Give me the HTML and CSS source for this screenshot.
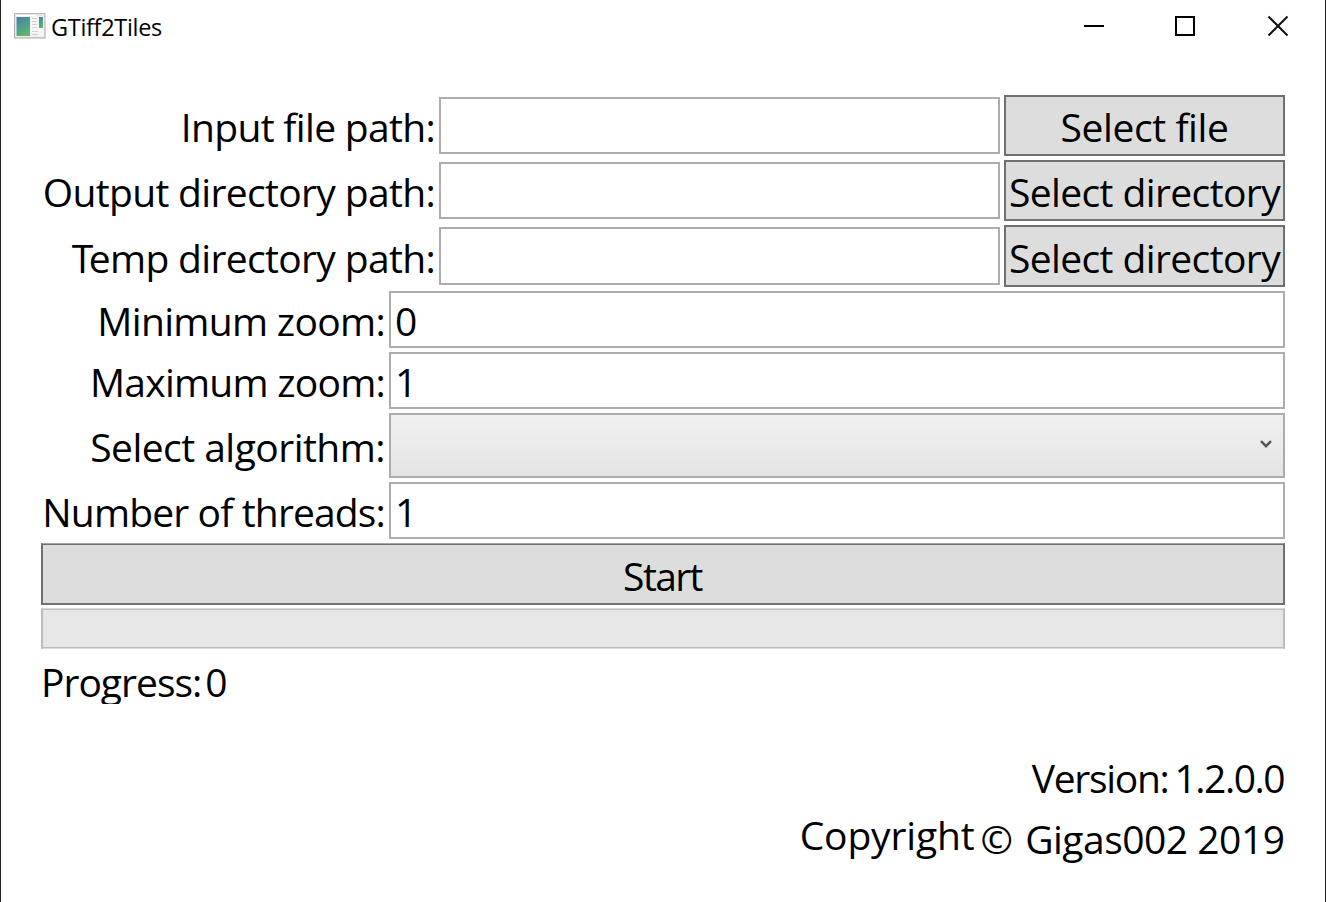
FILE: index.html
```html
<!DOCTYPE html>
<html lang="en">
<head>
<meta charset="utf-8">
<title>GTiff2Tiles</title>
<link rel="stylesheet" href="styles.css">
</head>
<body>
<div class="window">
  <header class="titlebar">
    <svg class="app-icon" width="32" height="27" viewBox="0 0 32 27">
      <defs>
        <linearGradient id="pane" x1="0" y1="0" x2="0.5" y2="1"><stop offset="0" stop-color="#4a7ba6"/><stop offset="0.5" stop-color="#4c9a92"/><stop offset="1" stop-color="#62b56b"/></linearGradient>
        <linearGradient id="frame" x1="0" y1="0" x2="0" y2="1"><stop offset="0" stop-color="#b4b7bd"/><stop offset="1" stop-color="#a9a9b0"/></linearGradient>
      </defs>
      <rect x="0.5" y="0.5" width="30.500" height="24.500" fill="#e6e7ea" stroke="url(#frame)"/>
      <rect x="2" y="3" width="28" height="20.500" fill="#f5f5f6"/>
      <path d="M2 2.5H22" stroke="#fff"/>
      <rect x="2.500" y="4" width="13.500" height="19" fill="url(#pane)"/>
      <path d="M18 5.5h5M18 8.5h5M18 11.5h5M18 14.5h5M18 18.500h6M18 21.500h6" stroke="#d2d2d4"/>
      <rect x="25" y="4" width="4" height="11" fill="url(#pane)"/>
    </svg>
    <span class="title">GTiff2Tiles</span>
    <svg class="controls" width="206" height="24" viewBox="0 0 206 24" fill="none" stroke="#000" stroke-width="2">
      <path d="M0 12H20"/>
      <rect x="92" y="3" width="18" height="18"/>
      <path d="M184.500 2.500L203.500 21.500M203.500 2.500L184.500 21.500" stroke="#111"/>
    </svg>
  </header>
  <main class="form">
    <div class="row path-row"><label class="t-input">Input file path:</label><input class="box"><button class="btn t-file">Select file</button></div>
    <div class="row path-row"><label class="t-output">Output directory path:</label><input class="box"><button class="btn t-dir">Select directory</button></div>
    <div class="row path-row tall"><label class="t-temp"><span class="cap">T</span>emp directory path:</label><input class="box"><button class="btn t-dir">Select directory</button></div>
    <div class="row"><label class="t-min">Minimum zoom:</label><div class="box">0</div></div>
    <div class="row"><label class="t-max">Maximum zoom:</label><div class="box">1</div></div>
    <div class="row combo-row"><label class="t-alg">Select algorithm:</label><div class="combo"><svg width="12" height="9" viewBox="0 0 12 9"><path d="M1 1.200L6 6.200L11 1.200" fill="none" stroke="#555" stroke-width="2.400"/></svg></div></div>
    <div class="row"><label class="t-num">Number of threads:</label><div class="box">1</div></div>
    <button class="btn start">Start</button>
    <div class="progress"></div>
    <div class="status"><span class="t-prog">Progress:</span><span>0</span></div>
  </main>
  <footer class="about">
    <div class="line"><span class="t-ver">Version:</span><span class="t-vnum">1.2.0.0</span></div>
    <div class="line"><span class="copy t-copy">Copyright</span><span class="t-own"><span class="sign">© </span>Gigas002 2019</span></div>
  </footer>
</div>
</body>
</html>
```
FILE: styles.css
```css
* { box-sizing: border-box; }
body { margin: 0; background: #fff; }
.window {
  width: 1326px; height: 902px; overflow: hidden;
  border-left: 1px solid #222; border-right: 1px solid #222;
  background: #fff; color: #000;
  font: 39px/50px "Open Sans", sans-serif;
  white-space: nowrap;
}
.titlebar { display: flex; height: 95px; padding: 13px 35px 0 13px; align-items: flex-start; }
.app-icon { flex: none; }
.title { margin-left: 5px; font-size: 23.500px; line-height: 29px; letter-spacing: -0.32px; }
.controls { margin: 1px 0 0 auto; flex: none; }
.form { display: flex; flex-direction: column; gap: 4px; padding: 0 40px; }
.row { display: grid; grid-template-columns: 344px 896px; column-gap: 4px; height: 57px; align-items: center; }
.path-row { grid-template-columns: 394px 561px 281px; height: 61px; }
.tall { height: 62px; }
.combo-row { height: 65px; }
label { padding-top: 3px; justify-self: end; }
.box {
  width: 100%; height: 57px; margin: 0; padding: 3px 0 0 4px;
  border: 2px solid #abadb3; background: #fff; outline: 0;
  font: inherit; border-radius: 0;
}
.tall .box { height: 58px; }
.btn {
  height: 100%; width: 100%; margin: 0; padding: 3px 0 0;
  border: 2px solid #707070; border-radius: 0; background: #ddd; color: #000;
  font: inherit; text-align: center;
}
.combo {
  display: flex; justify-content: flex-end; align-items: center;
  height: 100%; padding: 0 11px 3px 0;
  border: 2px solid #acacac; background: linear-gradient(#f0f0f0, #e5e5e5);
}
.btn.start {
  height: 62px; padding: 5px 1px 0 0; letter-spacing: -1.6px;
  border-top: 1px solid #a5a5a5; box-shadow: inset 0 1px #707070;
}
.progress {
  height: 41px; margin-top: -1px;
  border: solid; border-width: 1px 2px; border-color: #dadada #bcbcbc;
  background: #e6e6e6; box-shadow: inset 0 1px #bcbcbc, inset 0 -1px #bcbcbc;
}
.status { display: flex; gap: 4px; height: 51px; padding-top: 9px; line-height: 39px; overflow: hidden; }
.about { display: flex; flex-direction: column; align-items: flex-end; padding: 49px 40px 0; }
.line { display: flex; gap: 6px; height: 61px; }
.copy { margin-top: -4px; }

/* Tracking per text */
.t-input { letter-spacing: -0.68px; }
.t-output { letter-spacing: -0.66px; }
.t-temp { letter-spacing: -0.66px; }
.t-temp .cap { letter-spacing: -4.500px; }
.t-min { letter-spacing: -0.68px; }
.t-max { letter-spacing: -0.76px; }
.t-alg { letter-spacing: -0.53px; }
.t-num { letter-spacing: -0.85px; }
.t-file { letter-spacing: -0.42px; }
.t-dir { letter-spacing: -0.6px; }
.t-prog { letter-spacing: -1px; }
.t-ver { letter-spacing: -1.3px; }
.t-vnum { letter-spacing: -1.5px; margin-right: 1px; }
.t-copy { letter-spacing: -0.15px; }
.t-own { letter-spacing: -0.5px; margin-right: 0.5px; }
.sign { letter-spacing: 1px; }
```
